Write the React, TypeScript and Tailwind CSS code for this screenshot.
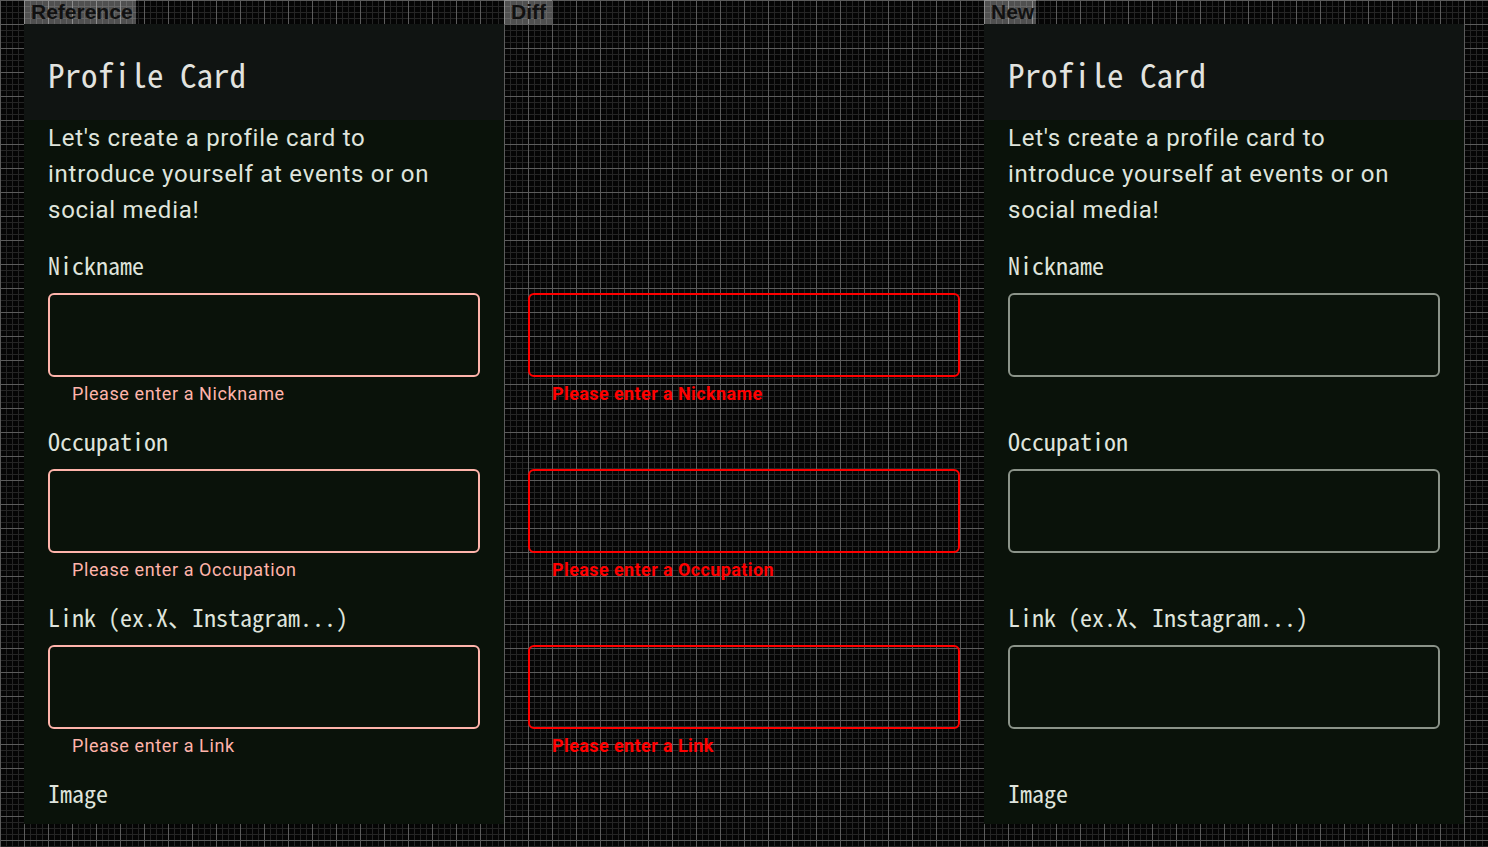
const monoJp = "font-['Noto_Sans_Mono_CJK_JP','Noto_Sans_CJK_JP',monospace]";

const fields = [
  { label: "Nickname", error: "Please enter a Nickname" },
  { label: "Occupation", error: "Please enter a Occupation" },
  { label: "Link (ex.X、Instagram...)", error: "Please enter a Link" },
];

function Tag({ text, width }: { text: string; width: string }) {
  return (
    <div className={`h-[24px] ${width} bg-white/30 px-[7px] text-[21px] leading-[24px] font-bold text-[#111] font-['Liberation_Sans',Arial,sans-serif]`}>
      {text}
    </div>
  );
}

function ProfileCard({ variant }: { variant: "reference" | "new" }) {
  const hasError = variant === "reference";
  return (
    <div className="w-[480px] h-[800px] overflow-hidden bg-[#0a120a] text-[#dfe4dc]">
      <div className="h-[96px] bg-[#101412] flex items-center px-[24px]">
        <h1 className={`${monoJp} text-[33px] leading-none text-[#e2e3df] pt-[4px]`}>Profile Card</h1>
      </div>
      <div className="px-[24px]">
        <p className="max-w-[410px] font-['Roboto',sans-serif] text-[24px] leading-[36px] tracking-[0.75px]">
          Let's create a profile card to introduce yourself at events or on social media!
        </p>
        <div className="mt-[20px]">
          {fields.map(f => (
            <div key={f.label} className="flex flex-col">
              <label className={`${monoJp} h-[36px] text-[24px] leading-[33px] whitespace-pre`}>{f.label}</label>
              <div
                className={`mt-[9px] h-[84px] rounded-[6px] border-2 ${hasError ? "border-[#ffb4ab]" : "border-[#8b9389]"}`}
              />
              <div className="h-[47px] pt-[5px] pl-[24px] font-['Roboto',sans-serif] text-[18px] leading-[24px] tracking-[0.6px] text-[#ffb4ab]">
                {hasError ? f.error : ""}
              </div>
            </div>
          ))}
          <label className={`${monoJp} block h-[36px] text-[24px] leading-[33px]`}>Image</label>
        </div>
      </div>
    </div>
  );
}

function DiffPanel() {
  return (
    <div className="w-[480px] h-[800px] overflow-hidden">
      <div className="h-[96px]" />
      <div className="px-[24px]">
        <div className="h-[108px]" />
        <div className="mt-[20px]">
          {fields.map(f => (
            <div key={f.label} className="flex flex-col">
              <div className="h-[36px]" />
              <div className="mt-[9px] h-[84px] rounded-[6px] border-2 border-[#ff0000]" />
              <div className="h-[47px] pt-[5px] pl-[24px] font-['Roboto',sans-serif] font-bold text-[18px] leading-[24px] tracking-[0.4px] text-[#ff0000]">
                {f.error}
              </div>
            </div>
          ))}
        </div>
      </div>
    </div>
  );
}

export default function App() {
  return (
    <div className="w-[1488px] h-[847px] overflow-hidden bg-[#050505] [background-image:linear-gradient(to_right,#5c5c5c_1px,transparent_1px),linear-gradient(to_bottom,#5c5c5c_1px,transparent_1px),linear-gradient(to_right,#252525_1px,transparent_1px),linear-gradient(to_bottom,#252525_1px,transparent_1px)] [background-size:24px_24px,24px_24px,6px_6px,6px_6px]">
      <div className="flex pl-[24px]">
        <div className="flex flex-col">
          <Tag text="Reference" width="w-[112px]" />
          <ProfileCard variant="reference" />
        </div>
        <div className="flex flex-col">
          <Tag text="Diff" width="w-[48px]" />
          <DiffPanel />
        </div>
        <div className="flex flex-col">
          <Tag text="New" width="w-[52px]" />
          <ProfileCard variant="new" />
        </div>
      </div>
    </div>
  );
}
